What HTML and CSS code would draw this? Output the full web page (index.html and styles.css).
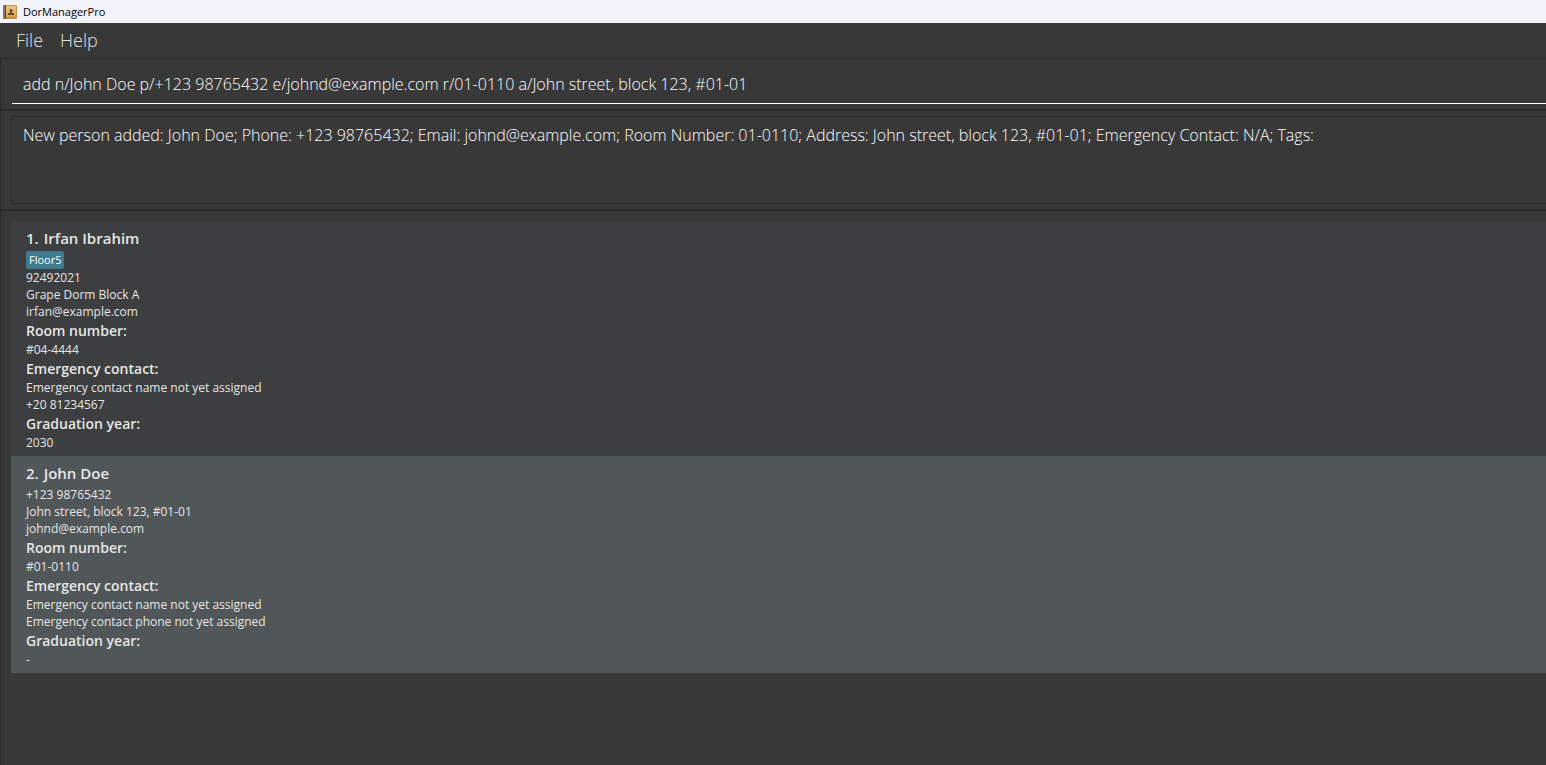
FILE: index.html
```html
<!DOCTYPE html>
<html lang="en">
<head>
<meta charset="utf-8">
<title>DorManagerPro</title>
<link rel="stylesheet" href="styles.css">
</head>
<body>
<div class="window">
  <header class="titlebar">
    <svg class="titlebar-icon" viewBox="0 0 14 14" aria-hidden="true">
      <defs>
        <linearGradient id="cover" x1="0" y1="0" x2="0" y2="1">
          <stop offset="0" stop-color="#edc67e"/>
          <stop offset="1" stop-color="#d9a14c"/>
        </linearGradient>
      </defs>
      <rect x="0" y="0" width="14" height="14" rx="1" fill="#c39450"/>
      <rect x="0" y="0" width="2" height="14" rx="1" fill="#86755e"/>
      <rect x="2" y="0" width="1" height="14" fill="#5a4630"/>
      <rect x="3" y="1" width="10" height="11" fill="url(#cover)"/>
      <rect x="3" y="12" width="10" height="1" fill="#b88a48"/>
      <path d="M8 4a1.500 1.500 0 0 1 1.500 1.500L9 7V8H11V10H5V8H7V7L6.500 5.500A1.500 1.500 0 0 1 8 4z" fill="#5f4a2c"/>
    </svg>
    <span class="titlebar-text">DorManagerPro</span>
  </header>
  <nav class="menubar">
    <button class="menu" type="button">File</button>
    <button class="menu" type="button">Help</button>
  </nav>
  <section class="pane command-pane">
    <input class="command-box" type="text" aria-label="Command" value="add n/John Doe p/+123 98765432 e/johnd@example.com r/01-0110 a/John street, block 123, #01-01">
  </section>
  <section class="pane result-pane">
    <textarea class="result-box" aria-label="Result" readonly>New person added: John Doe; Phone: +123 98765432; Email: johnd@example.com; Room Number: 01-0110; Address: John street, block 123, #01-01; Emergency Contact: N/A; Tags: </textarea>
  </section>
  <main class="pane list-pane">
    <ul class="people">
      <li class="card">
        <h2 class="name"><span>1.</span><span>Irfan Ibrahim</span></h2>
        <div class="tags"><span class="tag">Floor5</span></div>
        <p class="row">92492021</p>
        <p class="row">Grape Dorm Block A</p>
        <p class="row">irfan@example.com</p>
        <h3 class="label">Room number:</h3>
        <p class="row">#04-4444</p>
        <h3 class="label">Emergency contact:</h3>
        <p class="row">Emergency contact name not yet assigned</p>
        <p class="row">+20 81234567</p>
        <h3 class="label">Graduation year:</h3>
        <p class="row">2030</p>
      </li>
      <li class="card card-alt">
        <h2 class="name"><span>2.</span><span>John Doe</span></h2>
        <p class="row">+123 98765432</p>
        <p class="row">John street, block 123, #01-01</p>
        <p class="row">johnd@example.com</p>
        <h3 class="label">Room number:</h3>
        <p class="row">#01-0110</p>
        <h3 class="label">Emergency contact:</h3>
        <p class="row">Emergency contact name not yet assigned</p>
        <p class="row">Emergency contact phone not yet assigned</p>
        <h3 class="label">Graduation year:</h3>
        <p class="row">-</p>
      </li>
    </ul>
  </main>
</div>
</body>
</html>
```
FILE: styles.css
```css
* {
  box-sizing: border-box;
}

body {
  margin: 0;
  background: #383838;
  color: #e6e6e6;
  font-family: "Open Sans", "Noto Sans", sans-serif;
}

.window {
  display: flex;
  flex-direction: column;
  min-height: 100vh;
}

.titlebar {
  display: flex;
  align-items: center;
  gap: 6px;
  height: 23px;
  padding-left: 3px;
  background: #f2f3fa;
  color: #000;
  font-size: 11px;
}

.titlebar-icon {
  width: 14px;
  height: 14px;
}

.menubar {
  display: flex;
  align-items: flex-start;
  gap: 17px;
  height: 35px;
  padding-left: 16px;
}

.menu {
  padding: 0;
  border: 0;
  background: none;
  color: #e0e0e0;
  font: 300 18px/34px "Open Sans", "Noto Sans", sans-serif;
}

.pane {
  border: 1px solid #2b2b2b;
  border-right: 0;
}

.command-pane {
  padding: 5px 0 5px 11px;
}

.command-box {
  display: block;
  width: 100%;
  height: 40px;
  padding: 0 11px;
  border: 0;
  border-bottom: 1px solid #fff;
  outline: 0;
  background: none;
  color: #fff;
  font: 300 16px "Open Sans", "Noto Sans", sans-serif;
}

.result-pane {
  padding: 5px 0 5px 10px;
}

.result-box {
  display: block;
  width: 100%;
  height: 88px;
  padding: 6px 11px;
  border: 1px solid #2b2b2b;
  border-right: 0;
  outline: 0;
  resize: none;
  background: none;
  color: #fff;
  font: 300 16px/24px "Open Sans", "Noto Sans", sans-serif;
}

.list-pane {
  flex: 1;
  padding: 10px 0 10px 10px;
  border-bottom: 0;
}

.people {
  margin: 0;
  padding: 0;
  list-style: none;
}

.card {
  padding: 5px 15px;
  background: #3c3e3f;
}

.card-alt {
  background: #515658;
}

.name {
  display: flex;
  gap: 5px;
  margin: 0;
  font-size: 15px;
  font-weight: 600;
  line-height: 25px;
}

.tags {
  display: flex;
  gap: 7px;
}

.tag {
  padding: 0 3px;
  border-radius: 2px;
  background: #3e7b91;
  color: #fff;
  font-size: 11px;
  line-height: 18px;
}

.row {
  margin: 0;
  font-size: 12px;
  line-height: 17px;
}

.label {
  margin: 0;
  font-size: 14px;
  font-weight: 600;
  line-height: 21px;
}
```
